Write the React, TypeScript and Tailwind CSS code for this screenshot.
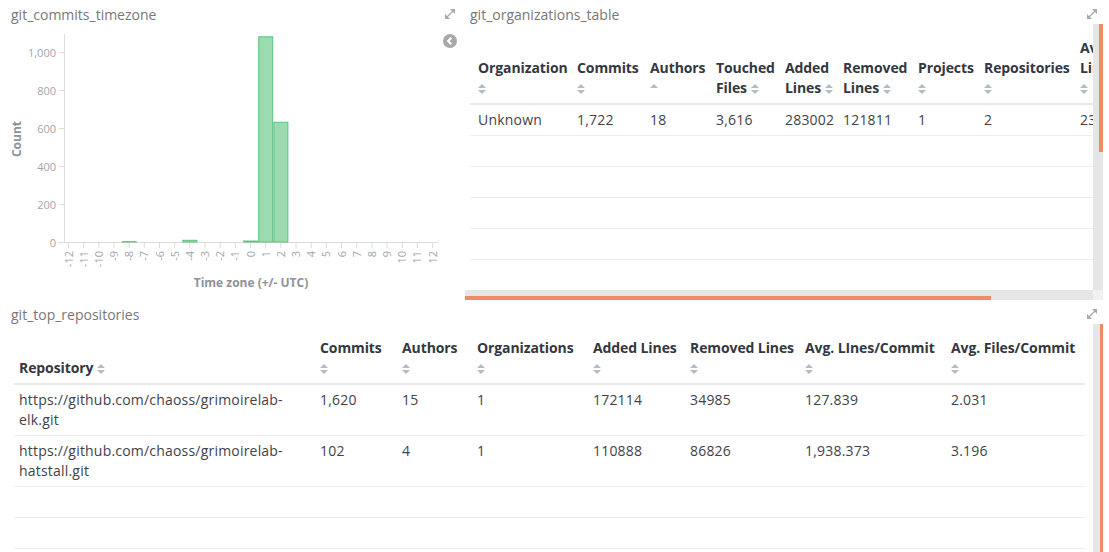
import React from "react";

const TICKS = Array.from({ length: 25 }, (_, i) => i - 12);
const tickX = (i: number) => 68.5 + i * 15.17;
const Y_BASE = 212;
const yScale = 0.19;

// bucket values by tick index
const BARS: { idx: number; value: number }[] = [
  { idx: 4, value: 2 },
  { idx: 8, value: 9 },
  { idx: 12, value: 5 },
  { idx: 13, value: 1080 },
  { idx: 14, value: 630 },
];

function SortIcon({ upOnly = false }: { upOnly?: boolean }) {
  return (
    <svg width="8" height="12" viewBox="0 0 8 12" className="inline-block align-middle">
      <polygon points="0,5 4,1 8,5" fill="#b4bcc3" />
      {!upOnly && <polygon points="0,7 8,7 4,11" fill="#b4bcc3" />}
    </svg>
  );
}

function ExpandIcon() {
  return (
    <svg width="10" height="10" viewBox="0 0 10 10">
      <line x1="2" y1="8" x2="8" y2="2" stroke="#a9a9a9" strokeWidth="1.3" />
      <polygon points="5,0 10,0 10,5" fill="#a9a9a9" />
      <polygon points="0,5 0,10 5,10" fill="#a9a9a9" />
    </svg>
  );
}

function CollapseIcon() {
  return (
    <svg width="14" height="14" viewBox="0 0 14 14">
      <circle cx="7" cy="7" r="7" fill="#a8a8a8" />
      <path d="M8.3 3.8 L5.1 7 L8.3 10.2" stroke="#fff" strokeWidth="2.1" fill="none" />
    </svg>
  );
}

function TimezoneChart() {
  const labels = [0, 200, 400, 600, 800, 1000];
  return (
    <svg width="440" height="270" viewBox="0 0 440 270" className="block">
      {/* y axis */}
      <line x1="64.5" y1="4" x2="64.5" y2="212.5" stroke="#dcdcdc" />
      {labels.map((v) => {
        const y = Y_BASE - v * yScale + 0.5;
        return (
          <g key={v}>
            <line x1="59" y1={y} x2="64.5" y2={y} stroke="#dcdcdc" />
            <text x="56" y={y + 4} textAnchor="end" fontSize="11" fill="#a0a5ab">
              {v === 1000 ? "1,000" : v}
            </text>
          </g>
        );
      })}
      {/* x axis */}
      <line x1="58" y1="212.5" x2="438" y2="212.5" stroke="#dcdcdc" />
      {TICKS.map((t, i) => {
        const x = tickX(i);
        return (
          <g key={t}>
            <line x1={x} y1="212.5" x2={x} y2="218" stroke="#dcdcdc" />
            <text
              transform={`translate(${x + 4} 221) rotate(-90)`}
              textAnchor="end"
              fontSize="11"
              fill="#a0a5ab"
            >
              {t}
            </text>
          </g>
        );
      })}
      {BARS.map((b) => {
        const h = b.value * yScale;
        const x = tickX(b.idx) - 7;
        return (
          <rect
            key={b.idx}
            x={x}
            y={Y_BASE - h}
            width="14"
            height={h}
            fill="#9cdbb0"
            stroke="#5dc27f"
            strokeWidth="1"
          />
        );
      })}
      <text
        transform="translate(21 109) rotate(-90)"
        textAnchor="middle"
        fontSize="12"
        fontWeight="700"
        fill="#8d9298"
      >
        Count
      </text>
      <text x="251" y="257" textAnchor="middle" fontSize="12" fontWeight="700" fill="#8d9298">
        Time zone (+/- UTC)
      </text>
    </svg>
  );
}

const orgCols = [99, 73, 66, 69, 58, 75, 66, 96, 130];

function OrgTable() {
  const headers: React.ReactNode[] = [
    <>Organization<br /><SortIcon /></>,
    <>Commits<br /><SortIcon /></>,
    <>Authors<br /><SortIcon upOnly /></>,
    <>Touched<br />Files <SortIcon /></>,
    <>Added<br />Lines <SortIcon /></>,
    <>Removed<br />Lines <SortIcon /></>,
    <>Projects<br /><SortIcon /></>,
    <>Repositories<br /><SortIcon /></>,
    <>Avg.<br />Lines/Commit<br /><SortIcon /></>,
  ];
  const row = ["Unknown", "1,722", "18", "3,616", "283002", "121811", "1", "2", "234.915"];
  return (
    <div className="mt-[14px] w-[732px]">
      <div className="flex items-end border-b-2 border-[#e6eaed]">
        {headers.map((h, i) => (
          <div
            key={i}
            style={{ width: orgCols[i] }}
            className="shrink-0 pl-[8px] pb-[5px] font-bold text-[14px] leading-[20px] text-[#343741] whitespace-nowrap tracking-[-0.1px]"
          >
            {h}
          </div>
        ))}
      </div>
      <div className="flex border-b border-[#eceff1] py-[5px]">
        {row.map((c, i) => (
          <div
            key={i}
            style={{ width: orgCols[i] }}
            className="shrink-0 pl-[8px] text-[14px] leading-[20px] text-[#3f4248] whitespace-nowrap tracking-[0.2px]"
          >
            {c}
          </div>
        ))}
      </div>
      {[0, 1, 2, 3].map((r) => (
        <div key={r} className="h-[31px] border-b border-[#eceff1]" />
      ))}
    </div>
  );
}

const repoCols = [301, 82, 75, 116, 97, 115, 146, 139];

function RepoTable() {
  const headers: React.ReactNode[] = [
    <>Repository <SortIcon /></>,
    <>Commits<br /><SortIcon /></>,
    <>Authors<br /><SortIcon /></>,
    <>Organizations<br /><SortIcon /></>,
    <>Added Lines<br /><SortIcon /></>,
    <>Removed Lines<br /><SortIcon /></>,
    <>Avg. LInes/Commit<br /><SortIcon /></>,
    <>Avg. Files/Commit<br /><SortIcon /></>,
  ];
  const rows: React.ReactNode[][] = [
    [<>https://github.com/chaoss/grimoirelab-<br />elk.git</>, "1,620", "15", "1", "172114", "34985", "127.839", "2.031"],
    [<>https://github.com/chaoss/grimoirelab-<br />hatstall.git</>, "102", "4", "1", "110888", "86826", "1,938.373", "3.196"],
  ];
  return (
    <div className="mt-[14px] w-[1071px]">
      <div className="flex items-end border-b-2 border-[#e6eaed]">
        {headers.map((h, i) => (
          <div
            key={i}
            style={{ width: repoCols[i] }}
            className="shrink-0 pl-[5px] pb-[5px] font-bold text-[14px] leading-[20px] text-[#343741] whitespace-nowrap tracking-[-0.1px]"
          >
            {h}
          </div>
        ))}
      </div>
      {rows.map((r, ri) => (
        <div key={ri} className="flex border-b border-[#eceff1] py-[5px]">
          {r.map((c, i) => (
            <div
              key={i}
              style={{ width: repoCols[i] }}
              className="shrink-0 pl-[5px] text-[14px] leading-[20px] text-[#3f4248] whitespace-nowrap tracking-[0.2px]"
            >
              {c}
            </div>
          ))}
        </div>
      ))}
      {[0, 1, 2].map((r) => (
        <div key={r} className="h-[31px] border-b border-[#eceff1]" />
      ))}
    </div>
  );
}

export default function App() {
  return (
    <div className="w-[1109px] h-[552px] overflow-hidden bg-white font-['Open_Sans',sans-serif]">
      {/* top row */}
      <div className="flex h-[300px]">
        {/* chart panel */}
        <div className="w-[465px] shrink-0">
          <div className="h-[30px] flex justify-between pl-[11px] pr-[10px] pt-[5px]">
            <span className="text-[14px] leading-[20px] text-[#777]">git_commits_timezone</span>
            <div className="pt-[4px]">
              <ExpandIcon />
            </div>
          </div>
          <div className="flex">
            <TimezoneChart />
            <div className="pl-[3px] pt-[4px]">
              <CollapseIcon />
            </div>
          </div>
        </div>

        {/* organizations panel */}
        <div className="w-[644px] shrink-0 flex flex-col">
          <div className="h-[24px] flex justify-between pl-[5px] pr-[12px] pt-[5px]">
            <span className="text-[14px] leading-[20px] text-[#777]">git_organizations_table</span>
            <div className="pt-[4px]">
              <ExpandIcon />
            </div>
          </div>
          <div className="flex h-[266px]">
            <div className="w-[628px] overflow-hidden pl-[5px]">
              <OrgTable />
            </div>
            <div className="w-[10px] flex flex-col bg-[#e6e6e6]">
              <div className="h-[128px] flex justify-end">
                <div className="w-[4px] bg-[#ef8c66]" />
              </div>
            </div>
          </div>
          <div className="flex h-[10px]">
            <div className="w-[628px] bg-[#e6e6e6] flex flex-col justify-end">
              <div className="w-[526px] h-[4px] bg-[#ef8c66]" />
            </div>
            <div className="w-[10px] bg-[#f1f1f1]" />
          </div>
        </div>
      </div>

      {/* repositories panel */}
      <div className="h-[252px] flex flex-col">
        <div className="h-[24px] flex justify-between pl-[11px] pr-[12px] pt-[5px]">
          <span className="text-[14px] leading-[20px] text-[#777]">git_top_repositories</span>
          <div className="pt-[4px]">
            <ExpandIcon />
          </div>
        </div>
        <div className="flex flex-1">
          <div className="w-[1093px] overflow-hidden pl-[14px]">
            <RepoTable />
          </div>
          <div className="w-[10px] flex bg-[#e6e6e6] justify-end">
            <div className="w-[3px] bg-[#ef8c66]" />
          </div>
        </div>
      </div>
    </div>
  );
}
